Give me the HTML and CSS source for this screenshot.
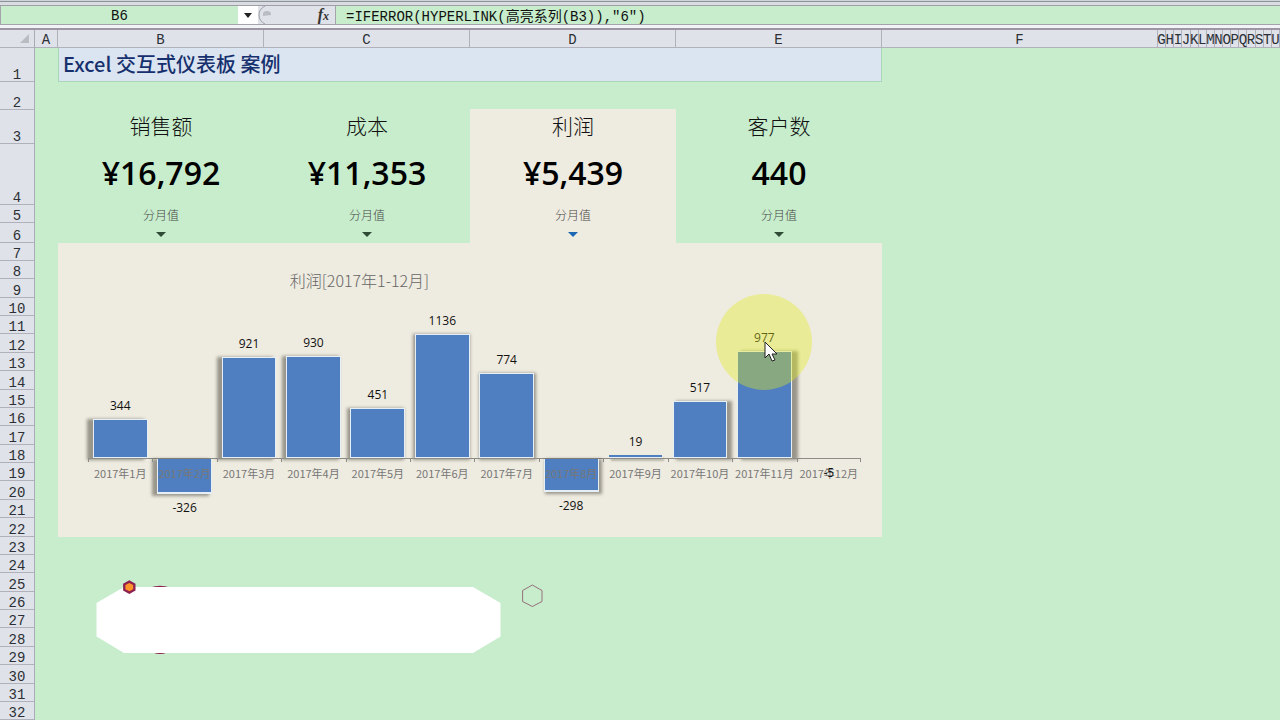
FILE: index.html
```html
<!DOCTYPE html>
<html lang="zh-CN">
<head>
<meta charset="utf-8">
<title>Excel 交互式仪表板 案例</title>
<link rel="stylesheet" href="styles.css">
</head>
<body>
<div class="ribbon-edge"></div>
<div class="formula-bar">
  <input class="name-box" type="text" value="B6" aria-label="名称框">
  <button class="name-drop" type="button" aria-label="展开名称列表">
    <svg width="8" height="5" viewBox="0 0 8 5"><path d="M0 0h8L4 5z" fill="#222"/></svg>
  </button>
  <div class="fx-area">
    <svg width="18" height="18" viewBox="0 0 18 18"><path d="M7 0Q1 3 1 9T7 18" fill="none" stroke="#9a9ea6"/><path d="M5 10V8q0-3 4-3t4 3v1z" fill="#b9bcc2"/></svg>
    <button class="fx" type="button" aria-label="插入函数"><i>f</i><i class="fx-x">x</i></button>
  </div>
  <input class="formula" type="text" value="=IFERROR(HYPERLINK(高亮系列(B3)),&quot;6&quot;)" aria-label="编辑栏">
</div>
<div class="sheet">
  <div class="row-heads">
    <div class="corner"><svg width="9" height="9" viewBox="0 0 9 9"><path d="M9 0v9H0z" fill="#b9bcc1"/></svg></div>
    <div class="rh r1">1</div><div class="rh r2">2</div><div class="rh r3">3</div><div class="rh r4">4</div><div class="rh r5">5</div><div class="rh r6">6</div>
    <div class="rh">7</div><div class="rh">8</div><div class="rh tall">9</div><div class="rh">10</div><div class="rh">11</div><div class="rh tall">12</div><div class="rh">13</div><div class="rh tall">14</div>
    <div class="rh">15</div><div class="rh">16</div><div class="rh tall">17</div><div class="rh">18</div><div class="rh">19</div><div class="rh tall">20</div><div class="rh">21</div><div class="rh tall">22</div>
    <div class="rh">23</div><div class="rh">24</div><div class="rh tall">25</div><div class="rh">26</div><div class="rh">27</div><div class="rh tall">28</div><div class="rh">29</div><div class="rh tall">30</div>
    <div class="rh">31</div><div class="rh">32</div>
  </div>
  <div class="main">
    <div class="columns col-heads">
      <div class="ch">A</div><div class="ch">B</div><div class="ch">C</div><div class="ch">D</div><div class="ch">E</div><div class="ch">F</div>
      <div class="narrow"><div class="ch">G</div><div class="ch">H</div><div class="ch">I</div><div class="ch">J</div><div class="ch">K</div><div class="ch">L</div><div class="ch">M</div><div class="ch">N</div><div class="ch">O</div><div class="ch">P</div><div class="ch">Q</div><div class="ch">R</div><div class="ch">S</div><div class="ch">T</div><div class="ch">U</div></div>
    </div>
    <div class="columns">
      <div class="dashboard">
        <h1 class="title">Excel 交互式仪表板 案例</h1>
        <div class="cards">
          <div class="card"><div class="card-name">销售额</div><div class="card-value">¥16,792</div><div class="card-note">分月值</div><a class="card-link" href="#chart" aria-label="销售额"><svg width="10" height="5" viewBox="0 0 10 5"><path d="M0 0h10L5 5z" fill="currentColor"/></svg></a></div>
          <div class="card"><div class="card-name">成本</div><div class="card-value">¥11,353</div><div class="card-note">分月值</div><a class="card-link" href="#chart" aria-label="成本"><svg width="10" height="5" viewBox="0 0 10 5"><path d="M0 0h10L5 5z" fill="currentColor"/></svg></a></div>
          <div class="card active"><div class="card-name">利润</div><div class="card-value">¥5,439</div><div class="card-note">分月值</div><a class="card-link" href="#chart" aria-label="利润"><svg width="10" height="5" viewBox="0 0 10 5"><path d="M0 0h10L5 5z" fill="currentColor"/></svg></a></div>
          <div class="card"><div class="card-name">客户数</div><div class="card-value">440</div><div class="card-note">分月值</div><a class="card-link" href="#chart" aria-label="客户数"><svg width="10" height="5" viewBox="0 0 10 5"><path d="M0 0h10L5 5z" fill="currentColor"/></svg></a></div>
        </div>
        <div class="chart" id="chart">
          <h2 class="chart-title">利润[2017年1-12月]</h2>
          <div class="plot">
            <div class="month"><div class="up"><span class="val">344</span><div class="bar" style="height:37px;--dx:-5px"></div></div><div class="down"><span class="name">2017年1月</span></div></div>
            <div class="month"><div class="up"></div><div class="down"><div class="bar neg" style="height:33px;--dx:-4px"></div><span class="name">2017年2月</span><span class="val">-326</span></div></div>
            <div class="month"><div class="up"><span class="val">921</span><div class="bar" style="height:99px;--dx:-4px"></div></div><div class="down"><span class="name">2017年3月</span></div></div>
            <div class="month"><div class="up"><span class="val">930</span><div class="bar" style="height:100px;--dx:-3px"></div></div><div class="down"><span class="name">2017年4月</span></div></div>
            <div class="month"><div class="up"><span class="val">451</span><div class="bar" style="height:48px;--dx:-2px"></div></div><div class="down"><span class="name">2017年5月</span></div></div>
            <div class="month"><div class="up"><span class="val">1136</span><div class="bar" style="height:122px;--dx:-1px"></div></div><div class="down"><span class="name">2017年6月</span></div></div>
            <div class="month"><div class="up"><span class="val">774</span><div class="bar" style="height:83px;--dx:1px"></div></div><div class="down"><span class="name">2017年7月</span></div></div>
            <div class="month"><div class="up"></div><div class="down"><div class="bar neg" style="height:31px;--dx:2px"></div><span class="name">2017年8月</span><span class="val">-298</span></div></div>
            <div class="month"><div class="up"><span class="val">19</span><div class="bar thin" style="height:2px"></div></div><div class="down"><span class="name">2017年9月</span></div></div>
            <div class="month"><div class="up"><span class="val">517</span><div class="bar" style="height:55px;--dx:4px"></div></div><div class="down"><span class="name">2017年10月</span></div></div>
            <div class="month"><div class="up"><span class="val">977</span><div class="bar" style="height:105px;--dx:5px"></div></div><div class="down"><span class="name">2017年11月</span></div>
              <div class="spot"></div>
              <svg class="pointer" width="14" height="21" viewBox="0 0 14 21"><path d="M1 1v16l4-4 3 7 3-1-3-6h5z" fill="#fff" stroke="#222" stroke-linejoin="round"/></svg>
            </div>
            <div class="month"><div class="up"></div><div class="down"><div class="bar neg flat"></div><span class="name">2017年12月</span><span class="val">-5</span></div></div>
          </div>
        </div>
        <svg class="shapes" width="460" height="84" viewBox="90 576 460 84">
          <path d="M150 587.500q10-3.500 20 0zM153 652.500q7 3 14 0z" fill="#8e2750"/>
          <path d="M124 587H473L500.500 603V636.500L473 653H124L96.500 636.500V603z" fill="#fff"/>
          <path d="M129.300 580.300l6.200 3.400v6.800l-6.200 3.400-6.200-3.400v-6.800z" fill="#8e2050"/>
          <path d="M129.300 583l3.900 2v4.200l-3.900 2-3.900-2V585z" fill="#ff9228"/>
          <path d="M532.300 585l9.700 5.500v11l-9.700 5-9.700-5v-11z" fill="none" stroke="#96707a"/>
        </svg>
      </div>
    </div>
  </div>
</div>
</body>
</html>
```
FILE: styles.css
```css
* { box-sizing: border-box; }
body {
  margin: 0;
  min-height: 100vh;
  display: flex;
  flex-direction: column;
  overflow: hidden;
  background: #c7edcc;
  font-family: "Noto Sans CJK SC", sans-serif;
  color: #111;
}
input, button { border: 0; border-radius: 0; margin: 0; padding: 0; font: inherit; color: inherit; }

/* formula bar */
.ribbon-edge { height: 5px; background: #d9dde2; border-top: 1px solid #cdd4d8; box-shadow: inset 0 1px #8f919b; }
.formula-bar {
  display: flex;
  height: 20px;
  background: #dfe2e8;
  border-top: 1px solid #a09fa8;
  border-bottom: 1px solid #a5a4ac;
}
.name-box, .formula {
  background: #c7edcc;
  font-family: "Liberation Mono", "Noto Sans CJK SC", monospace;
  font-size: 14px;
  outline: 0;
}
.name-box { width: 238px; padding-top: 2px; text-align: center; border-left: 1px solid #a5a4ac; }
.name-drop { width: 20px; background: #fff; display: flex; align-items: center; justify-content: center; }
.fx-area { width: 78px; display: flex; justify-content: space-between; padding-right: 6px; border-right: 1px solid #a5a4ac; }
.fx { background: none; font-family: "Liberation Serif", serif; font-size: 16px; font-weight: bold; line-height: 18px; color: #333; }
.fx-x { font-size: 12px; }
.formula { flex: 1; min-width: 0; padding-left: 10px; }

/* sheet */
.sheet { display: flex; flex: 1; margin-top: 3px; border-top: 2px solid #9a97a3; box-shadow: 0 -3px #f1f3f6; }
.row-heads { width: 35px; background: #dfe2e8; border-right: 1px solid #a9abb5; }
.corner { height: 18px; display: flex; align-items: center; justify-content: flex-end; padding-right: 5px; border-bottom: 1px solid #b0b1ba; }
.rh, .ch { font-family: "Liberation Mono", monospace; font-size: 14px; color: #2c3036; }
.rh { height: 18px; display: flex; align-items: flex-end; justify-content: center; line-height: 12px; border-bottom: 1px solid #b0b1ba; }
.tall { height: 19px; }
.r1 { height: 34px; }
.r2 { height: 28px; }
.r3 { height: 34px; }
.r4 { height: 61px; }
.r5 { height: 18px; }
.r6 { height: 20px; }
.main { flex: 1; min-width: 0; }
.columns { display: grid; grid-template-columns: 23px 206fr 206fr 206fr 206fr 276fr 122fr; }
.col-heads { height: 18px; background: #dfe2e8; border-bottom: 1px solid #b0b1ba; }
.ch { display: flex; justify-content: center; padding-top: 2px; line-height: 17px; min-width: 0; height: 17px; border-right: 1px solid #b0b1ba; }
.narrow { display: grid; grid-template-columns: repeat(15, 1fr); }

/* dashboard */
.dashboard { grid-column: 2 / 6; }
.title {
  margin: 0 0 27px;
  padding-left: 4px;
  height: 34px;
  line-height: 31px;
  font-size: 20px;
  font-weight: 500;
  color: #16306e;
  background: #dbe5f1;
  border: 1px solid #a9d8b8;
  border-top: 0;
}
.cards { display: grid; grid-template-columns: repeat(4, 1fr); }
.card { display: flex; flex-direction: column; align-items: center; }
.card.active, .chart { background: #eeebe0; }
.card-name { line-height: 33px; font-size: 21px; font-weight: 300; }
.card-value { line-height: 62px; font-family: "Open Sans", sans-serif; font-size: 32px; font-weight: 600; color: #000; }
.card-note { line-height: 22px; font-size: 12px; font-weight: 300; color: #444; }
.card-link { height: 17px; display: flex; padding-top: 6px; color: #2f4a35; }
.active .card-link { color: #1a68b4; }

/* chart */
.chart { height: 294px; padding: 26px 21px 0 30px; }
.chart-title { margin: 0 0 0 -30px; width: 78%; text-align: center; line-height: 23px; font-size: 16px; font-weight: 300; color: #666; }
.plot { display: grid; grid-template-columns: repeat(12, 1fr); }
.month { position: relative; }
.up { height: 165px; display: flex; flex-direction: column; align-items: center; justify-content: flex-end; }
.down { position: relative; height: 78px; display: flex; flex-direction: column; align-items: center; border-top: 1px solid #8d8c86; }
.down::before { content: ""; position: absolute; left: 0; top: 0; width: 1px; height: 3px; background: #8d8c86; }
.month:last-child .down::after { content: ""; position: absolute; right: 0; top: 0; width: 1px; height: 3px; background: #8d8c86; }
.bar {
  box-sizing: content-box;
  width: 82%;
  background: #4f7fc0;
  border: 1px solid #e6eef6;
  box-shadow: var(--dx) 1px 3px 1px rgba(70, 65, 55, .5);
}
.neg { border-top: 0; border-bottom-width: 2px; }
.thin { border-width: 0 0 1px; box-shadow: 2px 3px 2px rgba(70, 65, 55, .3); }
.flat { height: 0; border: 0; box-shadow: 2px 1px 2px rgba(70, 65, 55, .4); }
.val { position: relative; line-height: 16px; font-family: "Open Sans", sans-serif; font-size: 12px; font-weight: 500; color: #111; }
.up .val { margin-bottom: 5px; }
.down .val { margin-top: 6px; }
.name { position: absolute; top: 6px; line-height: 16px; white-space: nowrap; font-size: 11px; color: #777; }
.spot { position: absolute; left: 50%; top: 1px; width: 96px; height: 96px; margin-left: -48px; border-radius: 50%; background: rgba(230, 237, 29, .38); }
.pointer { position: absolute; left: 50%; top: 48px; }
.chart-title + .plot { margin-top: 1px; }
.shapes { display: block; margin: 39px 0 0 32px; }
```
